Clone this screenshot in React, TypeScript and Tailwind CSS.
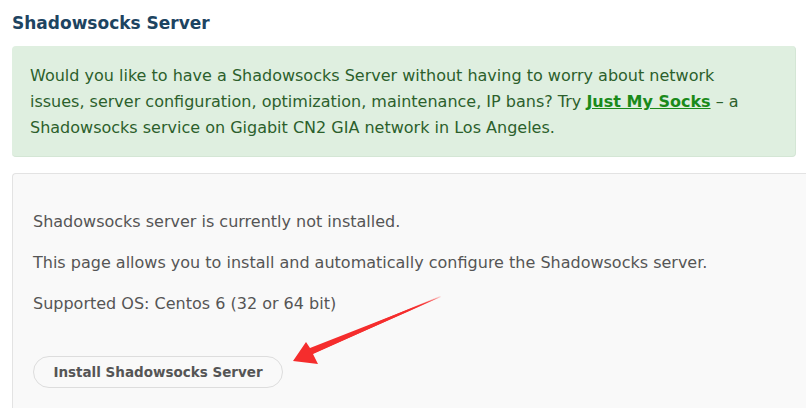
import React from 'react';

const font = { fontFamily: '"DejaVu Sans", Verdana, sans-serif' };

function PointerArrow() {
  return (
    <svg
      className="absolute left-[286px] top-[292px] pointer-events-none"
      width="160"
      height="76"
      viewBox="0 0 160 76">
      <defs>
        <linearGradient id="tail" x1="1" y1="0" x2="0" y2="1">
          <stop offset="0" stopColor="#ff3b3b" stopOpacity="0.15" />
          <stop offset="0.25" stopColor="#f52d2d" stopOpacity="1" />
          <stop offset="1" stopColor="#f52d2d" stopOpacity="1" />
        </linearGradient>
      </defs>
      <polygon
        points="155,5 154,4 24,58 26,62"
        fill="url(#tail)" />
      <polygon
        points="7,69 20,50 24,56 154,5 27,62 32,72"
        fill="#f52d2d" />
    </svg>
  );
}

export default function App() {
  return (
    <div className="relative w-[806px] h-[408px] overflow-hidden bg-white" style={font}>
      <div className="pl-3 pt-[12px]">
        <h2 className="text-[17px] leading-[22px] font-bold text-[#1d4461]">Shadowsocks Server</h2>
      </div>
      <div className="ml-3 mr-[10px] mt-[12px] rounded-[4px] bg-[#dfefe0] pl-[18px] pr-4 pt-[17px] pb-[15px] border-b border-r border-[#d4e6d5]">
        <p className="w-[716px] text-[16px] leading-[26px] text-[#2c5f2c]">
          Would you like to have a Shadowsocks Server without having to worry about network issues, server configuration, optimization, maintenance, IP bans? Try{' '}
          <a href="#" className="font-bold text-[#1a8a1a] underline">Just My Socks</a>
          {' '}– a Shadowsocks service on Gigabit CN2 GIA network in Los Angeles.
        </p>
      </div>
      <div className="ml-3 mt-[16px] h-[260px] rounded-tl-[4px] border-t border-l border-[#e3e3e3] bg-[#f9f9f9] pl-5 pt-[36px]">
        <div className="flex flex-col gap-[17px] text-[16px] leading-[24px] text-[#555555]">
          <p>Shadowsocks server is currently not installed.</p>
          <p>This page allows you to install and automatically configure the Shadowsocks server.</p>
          <p>Supported OS: Centos 6 (32 or 64 bit)</p>
        </div>
        <button className="mt-[40px] flex h-[32px] w-[250px] items-center justify-center rounded-full border border-[#dddddd] bg-[#f9f9f9] text-[13.5px] font-bold text-[#555555]">
          Install Shadowsocks Server
        </button>
      </div>
      <PointerArrow />
    </div>
  );
}
